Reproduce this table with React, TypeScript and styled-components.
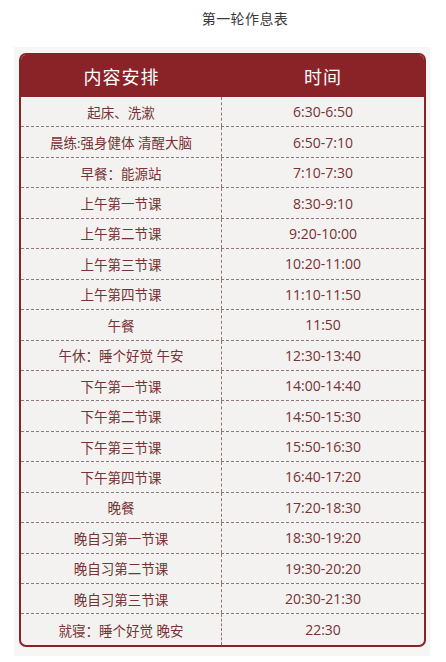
import React from "react";
import styled, { createGlobalStyle } from "styled-components";

const GlobalStyle = createGlobalStyle`
    html, body {
        margin: 0;
        padding: 0;
        background: #ffffff;
    }
    body {
        font-family: "Open Sans", "Noto Sans CJK SC", sans-serif;
    }
`;

const schedule: [string, string][] = [
    ["起床、洗漱", "6:30-6:50"],
    ["晨练:强身健体 清醒大脑", "6:50-7:10"],
    ["早餐：能源站", "7:10-7:30"],
    ["上午第一节课", "8:30-9:10"],
    ["上午第二节课", "9:20-10:00"],
    ["上午第三节课", "10:20-11:00"],
    ["上午第四节课", "11:10-11:50"],
    ["午餐", "11:50"],
    ["午休：睡个好觉 午安", "12:30-13:40"],
    ["下午第一节课", "14:00-14:40"],
    ["下午第二节课", "14:50-15:30"],
    ["下午第三节课", "15:50-16:30"],
    ["下午第四节课", "16:40-17:20"],
    ["晚餐", "17:20-18:30"],
    ["晚自习第一节课", "18:30-19:20"],
    ["晚自习第二节课", "19:30-20:20"],
    ["晚自习第三节课", "20:30-21:30"],
    ["就寝：睡个好觉 晚安", "22:30"],
];

const Page = styled.div`
    width: 446px;
    height: 662px;
    display: flex;
    flex-direction: column;
`;

const Title = styled.h1`
    margin: 0;
    height: 47px;
    padding-top: 8px;
    box-sizing: border-box;
    text-align: center;
    padding-left: 44px;
    font-size: 14px;
    font-weight: 400;
    color: #3a3a3a;
    letter-spacing: 0.4px;
    font-family: "Noto Sans CJK SC", sans-serif;
`;

const Panel = styled.div`
    width: 416px;
    margin-left: 14px;
    background: #f6f6f4;
    padding: 6px 4px 9px 5px;
    box-sizing: border-box;
`;

const Card = styled.div`
    border: 2px solid #8a2328;
    border-radius: 7px;
    overflow: hidden;
    background: #f3f2f0;
`;

const HeaderRow = styled.div`
    display: grid;
    grid-template-columns: 201px 1fr;
    height: 42px;
    background: #8a2328;
`;

const HeaderCell = styled.div`
    display: flex;
    align-items: center;
    justify-content: center;
    color: #ffffff;
    font-size: 18px;
    letter-spacing: 1px;
    font-family: "Noto Sans CJK SC", sans-serif;
`;

const Row = styled.div<{ $last?: boolean }>`
    display: grid;
    grid-template-columns: 201px 1fr;
    height: 30.45px;
    box-sizing: border-box;
    border-bottom: ${({ $last }) => ($last ? "none" : "1px dashed #8e7777")};
`;

const Cell = styled.div<{ $divider?: boolean }>`
    display: flex;
    align-items: center;
    justify-content: center;
    color: #763234;
    font-size: 13.5px;
    border-right: ${({ $divider }) => ($divider ? "1px dashed #8e7777" : "none")};
`;

const TimeCell = styled(Cell)`
    font-size: 14px;
    font-family: "Open Sans", sans-serif;
`;

const App = () => {
    return (
        <Page>
            <GlobalStyle />
            <Title>第一轮作息表</Title>
            <Panel>
                <Card>
                    <HeaderRow>
                        <HeaderCell>内容安排</HeaderCell>
                        <HeaderCell>时间</HeaderCell>
                    </HeaderRow>
                    {schedule.map(([item, time], i) => (
                        <Row key={item} $last={i === schedule.length - 1}>
                            <Cell $divider>{item}</Cell>
                            <TimeCell>{time}</TimeCell>
                        </Row>
                    ))}
                </Card>
            </Panel>
        </Page>
    );
};

export default App;
